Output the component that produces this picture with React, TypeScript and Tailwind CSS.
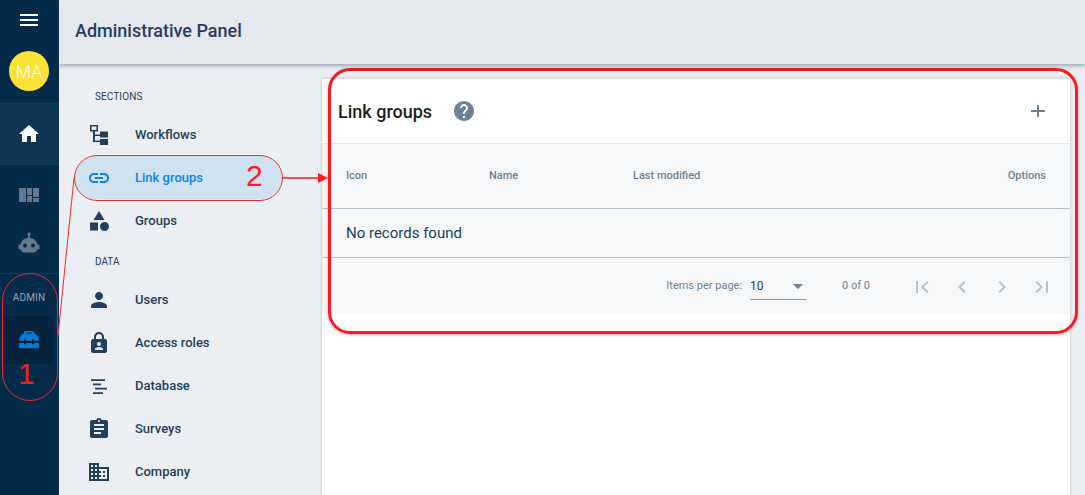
import React from 'react';

const Icon = ({ d, size = 24, className = '' }: { d: string; size?: number; className?: string }) => (
  <svg width={size} height={size} viewBox="0 0 24 24" fill="currentColor" fillRule="evenodd" className={className}>
    <path d={d} />
  </svg>
);

const paths = {
  menu: 'M3 18h18v-2H3v2zm0-5h18v-2H3v2zm0-7v2h18V6H3z',
  home: 'M10 20v-6h4v6h5v-8h3L12 3 2 12h3v8z',
  link: 'M3.9 12c0-1.71 1.39-3.1 3.1-3.1h4V7H7c-2.76 0-5 2.24-5 5s2.24 5 5 5h4v-1.9H7c-1.71 0-3.1-1.39-3.1-3.1zM8 13h8v-2H8v2zm9-6h-4v1.9h4c1.71 0 3.1 1.39 3.1 3.1s-1.39 3.1-3.1 3.1h-4V17h4c2.76 0 5-2.24 5-5s-2.24-5-5-5z',
  groups: 'M12 2l-5.5 9h11zM17.5 13a4.5 4.5 0 1 0 0 9 4.5 4.5 0 0 0 0-9zM3 13.5h8v8H3z',
  person: 'M12 12c2.21 0 4-1.79 4-4s-1.79-4-4-4-4 1.79-4 4 1.79 4 4 4zm0 2c-2.67 0-8 1.34-8 4v2h16v-2c0-2.66-5.33-4-8-4z',
  lock: 'M18 8h-1V6c0-2.76-2.24-5-5-5S7 3.24 7 6v2H6c-1.1 0-2 .9-2 2v10c0 1.1.9 2 2 2h12c1.1 0 2-.9 2-2V10c0-1.1-.9-2-2-2zM9 6c0-1.66 1.34-3 3-3s3 1.34 3 3v2H9V6zm3 5a2 2 0 1 1 0 4 2 2 0 0 1 0-4zm-4 8v-1c0-1.3 2.7-2 4-2s4 .7 4 2v1H8z',
  database: 'M4 5.2h14v1.7H4zM6 9.6h8v1.7H6zM8 13.7h12v1.7H8zM6 18.2h10v1.7H6z',
  assignment: 'M19 3h-4.18C14.4 1.84 13.3 1 12 1c-1.3 0-2.4.84-2.82 2H5c-1.1 0-2 .9-2 2v14c0 1.1.9 2 2 2h14c1.1 0 2-.9 2-2V5c0-1.1-.9-2-2-2zm-7 0c.55 0 1 .45 1 1s-.45 1-1 1-1-.45-1-1 .45-1 1-1zm2 14H7v-2h7v2zm3-4H7v-2h10v2zm0-4H7V7h10v2z',
  domain: 'M12 7V3H2v18h20V7H12zM6 19H4v-2h2v2zm0-4H4v-2h2v2zm0-4H4V9h2v2zm0-4H4V5h2v2zm4 12H8v-2h2v2zm0-4H8v-2h2v2zm0-4H8V9h2v2zm0-4H8V5h2v2zm10 12h-8v-2h2v-2h-2v-2h2v-2h-2V9h8v10zm-2-8h-2v2h2v-2zm0 4h-2v2h2v-2z',
  help: 'M12 2C6.48 2 2 6.48 2 12s4.48 10 10 10 10-4.48 10-10S17.52 2 12 2zm1 17h-2v-2h2v2zm2.07-7.75l-.9.92C13.45 12.9 13 13.5 13 15h-2v-.5c0-1.1.45-2.1 1.17-2.83l1.24-1.26c.37-.36.59-.86.59-1.41 0-1.1-.9-2-2-2s-2 .9-2 2H8c0-2.21 1.79-4 4-4s4 1.79 4 4c0 .88-.36 1.68-.93 2.25z',
  add: 'M19 13h-6v5h-2v-5H5v-2h6V6h2v5h6v2z',
  first: 'M18.41 16.59L13.82 12l4.59-4.59L17 6l-6 6 6 6zM6 6h2v12H6z',
  prev: 'M15.41 7.41L14 6l-6 6 6 6 1.41-1.41L10.83 12z',
  next: 'M10 6L8.59 7.41 13.17 12l-4.58 4.59L10 18l6-6z',
  last: 'M5.59 7.41L10.18 12l-4.59 4.59L7 18l6-6-6-6zM16 6h2v12h-2z',
  workflows: 'M3 2v6.5h3V19h7v3h8v-6h-8v1.5H8V13h5v1.5h8V8.5h-8v3H8V8.5h3V2H3zm1.6 1.6h4.8v3.3H4.6V3.6z',
  dashboard: 'M2 5h7v14H2zM10 5h5v7h-5zM10 13h5v6h-5zM16 5h6v9h-6zM16 15h6v4h-6z',
  robot: 'M12 1.5a1.7 1.7 0 0 1 .9 3.1V7c4.6.3 7.1 3.4 7.4 6.5h.7c.8 0 1.5.7 1.5 1.5v2c0 .8-.7 1.5-1.5 1.5h-.8C20 20 18.5 21.5 17 21.5H7C5.5 21.5 4 20 3.8 18.5H3c-.8 0-1.5-.7-1.5-1.5v-2c0-.8.7-1.5 1.5-1.5h.7C4 10.4 6.5 7.3 11.1 7V4.6A1.7 1.7 0 0 1 12 1.5zM8 12.5a2 2 0 1 0 0 4 2 2 0 0 0 0-4zm8 0a2 2 0 1 0 0 4 2 2 0 0 0 0-4z',
  toolbox: 'M9 3h6c1 0 1.8.6 2 1.6l.3 1c2.4.5 4.2 3 4.7 7.1h-5v-1.3h-2v1.3H9v-1.3H7v1.3H2c.5-4.1 2.3-6.6 4.7-7.1l.3-1C7.2 3.6 8 3 9 3zm.3 1.5-.3 1h6l-.3-1H9.3zM2 15h5v1.3h2V15h6v1.3h2V15h5v3.4c0 1.2-.8 1.9-1.8 1.9H3.8c-1 0-1.8-.7-1.8-1.9V15z',
};

const SideItem = ({ icon, label, active }: { icon: string; label: string; active?: boolean }) => (
  <div
    className={`flex items-center h-[43px] w-[208px] pl-[13px] rounded-[22px] ${
      active ? 'bg-[#cfe2f0] text-[#0b84e3]' : 'text-[#243f5c]'
    }`}
  >
    <Icon d={icon} size={24} />
    <span className="ml-[24px] text-[13px] font-medium">{label}</span>
  </div>
);

const HeadCell = ({ label, className = '' }: { label: string; className?: string }) => (
  <span className={`text-[11px] font-medium text-[#6d8296] ${className}`}>{label}</span>
);

export default function App() {
  return (
    <div className="relative flex h-[495px] w-[1085px] overflow-hidden bg-[#ebeef2] font-['Roboto',sans-serif]">
      {/* Left rail */}
      <div className="flex w-[59px] shrink-0 flex-col items-center bg-[#052b4a]">
        <div className="mr-[1px] flex h-[40px] items-center text-white">
          <Icon d={paths.menu} size={24} />
        </div>
        <div className="mr-[1px] mt-[11px] flex h-[40px] w-[40px] items-center justify-center rounded-full bg-[#fde135] text-[18px] font-light text-white">
          MA
        </div>
        <div className="mt-[12px] flex h-[62px] w-full items-center justify-center border-y border-[#15395a] bg-[#0f3452] pr-[1px] text-white">
          <Icon d={paths.home} size={24} />
        </div>
        <div className="mr-[1px] mt-[8px] flex h-[43px] items-center text-[#66798c]">
          <Icon d={paths.dashboard} size={24} />
        </div>
        <div className="mr-[1px] mt-[5px] flex h-[44px] items-center text-[#66798c]">
          <Icon d={paths.robot} size={24} />
        </div>
        <div className="mt-[8px] w-full border-t border-[#15395a] pr-[1px] pt-[16px] text-center text-[10px] leading-[15px] tracking-[0.2px] text-[#93a4b4]">
          ADMIN
        </div>
        <div className="mr-[1px] mt-[11px] flex h-[48px] w-[48px] items-center justify-center rounded-[5px] bg-[#05233b] text-[#0c78d2]">
          <Icon d={paths.toolbox} size={24} />
        </div>
      </div>

      {/* Main */}
      <div className="flex min-w-0 flex-1 flex-col">
        <div className="z-10 flex h-[64px] shrink-0 items-center bg-[#e5e8ec] pb-[4px] pl-[16px] shadow-[0_2px_4px_rgba(60,80,100,0.45)]">
          <h1 className="text-[18px] font-medium text-[#243f5c]">Administrative Panel</h1>
        </div>
        <div className="flex min-h-0 flex-1">
          {/* Section nav */}
          <div className="w-[263px] shrink-0 pl-[15px]">
            <div className="pb-[10px] pl-[21px] pt-[27px] text-[10px] leading-[12px] tracking-[0.1px] text-[#243f5c]">SECTIONS</div>
            <SideItem icon={paths.workflows} label="Workflows" />
            <SideItem icon={paths.link} label="Link groups" active />
            <SideItem icon={paths.groups} label="Groups" />
            <div className="pb-[10px] pl-[21px] pt-[14px] text-[10px] leading-[12px] text-[#243f5c]">DATA</div>
            <SideItem icon={paths.person} label="Users" />
            <SideItem icon={paths.lock} label="Access roles" />
            <SideItem icon={paths.database} label="Database" />
            <SideItem icon={paths.assignment} label="Surveys" />
            <SideItem icon={paths.domain} label="Company" />
          </div>

          {/* Panel */}
          <div className="mr-[15px] mt-[15px] flex-1 bg-white shadow-[0_0_3px_rgba(60,80,100,0.25)]">
            <div className="flex h-[65px] items-center border-b border-[#e6e9ed] pl-[16px] pr-[20px]">
              <h2 className="text-[18px] font-medium text-[#1d1f22]">Link groups</h2>
              <Icon d={paths.help} size={24} className="ml-[20px] text-[#6d8296]" />
              <Icon d={paths.add} size={24} className="ml-auto text-[#6d8296]" />
            </div>
            <div className="bg-[#f5f7f9]">
              <div className="flex h-[65px] items-center border-b border-[#b3bfca] px-[24px]">
                <HeadCell label="Icon" className="w-[143px]" />
                <HeadCell label="Name" className="w-[144px]" />
                <HeadCell label="Last modified" />
                <HeadCell label="Options" className="ml-auto" />
              </div>
              <div className="flex h-[49px] items-center border-b border-[#b3bfca] pl-[24px] text-[15px] text-[#243f5c]">
                No records found
              </div>
              <div className="flex h-[56px] items-center pr-[16px] pt-[1px] text-[11px] text-[#6d8296]">
                <span className="ml-auto">Items per page:</span>
                <div className="ml-[8px] flex h-[26px] w-[56px] items-center justify-between border-b border-[#8699aa] pr-[2px] text-[12px] text-[#243f5c]">
                  10
                  <span className="mr-[1px] h-0 w-0 border-x-[5px] border-t-[5px] border-x-transparent border-t-[#6d8296]" />
                </div>
                <span className="ml-[36px] mr-[40px]">0 of 0</span>
                <div className="flex gap-[16px] text-[#b7c2cc]">
                  <Icon d={paths.first} />
                  <Icon d={paths.prev} />
                  <Icon d={paths.next} />
                  <Icon d={paths.last} />
                </div>
              </div>
            </div>
          </div>
        </div>
      </div>

      {/* Red annotations over the screenshot */}
      <div className="absolute left-[2px] top-[273px] h-[128px] w-[56px] rounded-[28px] border border-[#ef2a2f]" />
      <div className="absolute left-[74px] top-[155px] h-[46px] w-[209px] rounded-[23px] border border-[#ef2a2f] shadow-[0_0_0_1px_rgba(255,255,255,0.6)]" />
      <div className="absolute left-[328px] top-[68px] h-[266px] w-[750px] rounded-[22px] border-[3px] border-[#fb1a1f] shadow-[0_1px_3px_rgba(40,50,60,0.35)]" />
      <span className="absolute left-[18px] top-[356px] font-['Liberation_Sans',sans-serif] text-[30px] leading-[36px] text-[#fb1a1f]">1</span>
      <span className="absolute left-[246px] top-[158px] font-['Liberation_Sans',sans-serif] text-[30px] leading-[36px] text-[#fb1a1f]">2</span>
      <svg className="pointer-events-none absolute left-0 top-0" width={1085} height={495} fill="none">
        <path d="M58 336L74 178" stroke="#ef2a2f" />
        <path d="M283 178H320" stroke="#fb1a1f" strokeWidth={1.5} />
        <path d="M318 173l10 5-10 5z" fill="#fb1a1f" />
      </svg>
    </div>
  );
}
